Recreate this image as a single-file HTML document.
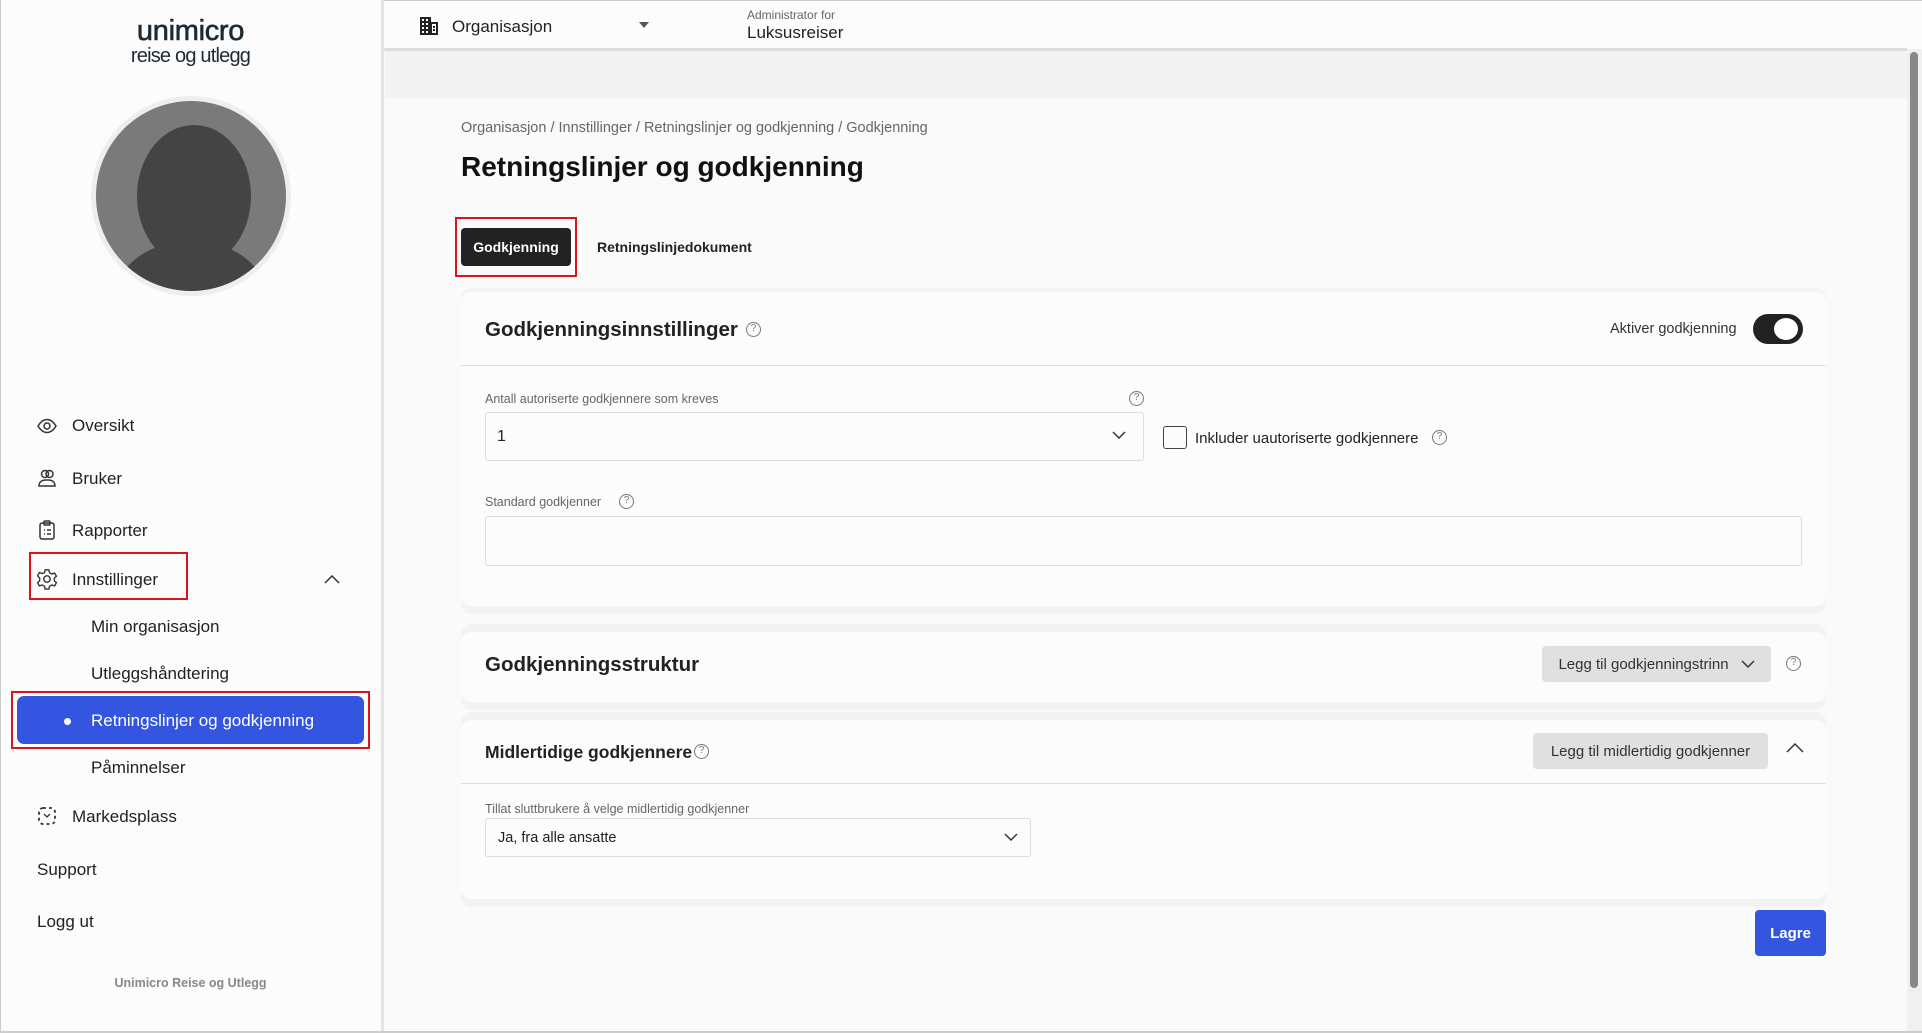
<!DOCTYPE html>
<html><head><meta charset="utf-8"><style>
*{box-sizing:border-box;margin:0;padding:0}
body{width:1922px;height:1033px;overflow:hidden;background:#fafafa;font-family:"Liberation Sans",Arial,sans-serif;color:#222;position:relative}
.a{position:absolute}
.side{left:0;top:0;width:384px;height:1033px;background:#fcfcfc;border-right:3px solid #e4e4e4;border-left:1px solid #ccc}
.nav{font-size:17px;color:#222;white-space:nowrap}
.ico{width:22px;height:22px}
.help{width:15px;height:15px;border:1.3px solid #777;border-radius:50%;font-size:10px;line-height:12px;text-align:center;color:#777}
.card{background:#f3f3f3;border-radius:10px;left:461px;width:1365px}
.inner{position:absolute;left:0;top:8px;right:0;background:#fcfcfc;border-radius:10px}
.btn{background:#e0e0e0;border-radius:4px;font-size:15px;color:#333;display:flex;align-items:center;justify-content:center}
.field{background:#fcfcfc;border:1px solid #ddd;border-radius:3px}
.lbl{font-size:12.5px;color:#666}
</style></head><body>
<div class="a" style="left:382px;top:0;width:1540px;height:49px;background:#fcfcfc;border-top:1px solid #ccc"></div>
<div class="a" style="left:382px;top:48px;width:1525px;height:3px;background:#ddd"></div>
<div class="a" style="left:385px;top:51px;width:1522px;height:47px;background:#f3f3f3"></div>
<div class="a" style="left:1907px;top:49px;width:15px;height:984px;background:#f0f0f0"></div>
<div class="a" style="left:1910px;top:52px;width:8px;height:936px;background:#888;border-radius:4px"></div>
<svg class="a" style="left:419px;top:16px" width="20" height="20" viewBox="0 0 20 20"><path d="M1 19V1h11v5h7v13z" fill="#222"/><g fill="#fff"><rect x="3" y="3" width="2" height="2"/><rect x="7" y="3" width="2" height="2"/><rect x="3" y="7" width="2" height="2"/><rect x="7" y="7" width="2" height="2"/><rect x="3" y="11" width="2" height="2"/><rect x="7" y="11" width="2" height="2"/><rect x="13" y="8" width="4" height="9"/><rect x="3" y="15" width="2" height="2"/><rect x="7" y="15" width="2" height="2"/></g><rect x="14" y="10" width="2" height="2" fill="#222"/><rect x="14" y="13" width="2" height="2" fill="#222"/></svg>
<div class="a" style="left:452px;top:17px;font-size:17px;color:#222">Organisasjon</div>
<div class="a" style="left:639px;top:22px;width:0;height:0;border-left:5px solid transparent;border-right:5px solid transparent;border-top:6px solid #555"></div>
<div class="a" style="left:747px;top:8px;font-size:12px;color:#666">Administrator for</div>
<div class="a" style="left:747px;top:23px;font-size:17px;color:#222">Luksusreiser</div>
<div class="a side"></div>
<div class="a" style="left:0;width:381px;top:15px;text-align:center;font-size:29px;color:#1c2b33;letter-spacing:-0.3px;-webkit-text-stroke:0.6px #1c2b33">unimicro</div>
<div class="a" style="left:0;width:381px;top:45px;text-align:center;font-size:20px;color:#1c2b33;letter-spacing:-0.8px">reise og utlegg</div>
<div class="a" style="left:91px;top:96px;width:200px;height:200px;border-radius:50%;background:#eee"></div>
<div class="a" style="left:96px;top:101px;width:190px;height:190px;border-radius:50%;background:#7a7a7a;overflow:hidden">
<div class="a" style="left:41px;top:24px;width:114px;height:142px;border-radius:50%;background:#444"></div>
<div class="a" style="left:20px;top:140px;width:150px;height:110px;border-radius:50%;background:#444"></div></div>
<svg class="a ico" style="left:36px;top:415px" viewBox="0 0 22 22" fill="none" stroke="#333" stroke-width="1.5"><path d="M2 11c3-5 6-6.5 9-6.5s6 1.5 9 6.5c-3 5-6 6.5-9 6.5S5 16 2 11z"/><circle cx="11" cy="11" r="3"/></svg>
<div class="a nav" style="left:72px;top:416px">Oversikt</div>
<svg class="a ico" style="left:36px;top:467px" viewBox="0 0 22 22" fill="none" stroke="#333" stroke-width="1.5"><circle cx="9" cy="7" r="3.5"/><circle cx="13.5" cy="7" r="3.5"/><path d="M3 19c0-4 3-6 7-6h2c4 0 7 2 7 6z"/></svg>
<div class="a nav" style="left:72px;top:469px">Bruker</div>
<svg class="a ico" style="left:36px;top:519px" viewBox="0 0 22 22" fill="none" stroke="#333" stroke-width="1.5"><rect x="4" y="4" width="14" height="16" rx="2"/><rect x="8" y="2" width="6" height="4" rx="1"/><path d="M8 11h1M11 11h4M8 15h1M11 15h4"/></svg>
<div class="a nav" style="left:72px;top:521px">Rapporter</div>
<svg class="a ico" style="left:36px;top:568px" viewBox="0 0 24 24" fill="none" stroke="#333" stroke-width="1.5"><path d="M10 2h4l.7 3 2.6 1.5 3-1 2 3.5-2.3 2v3l2.3 2-2 3.5-3-1-2.6 1.5-.7 3h-4l-.7-3-2.6-1.5-3 1-2-3.5 2.3-2v-3L1.7 8.5l2-3.5 3 1L9.3 5z"/><circle cx="12" cy="12" r="3.5"/></svg>
<div class="a nav" style="left:72px;top:570px">Innstillinger</div>
<div class="a" style="left:29px;top:552px;width:159px;height:48px;border:2px solid #d9141b"></div>
<svg class="a" style="left:324px;top:574px" width="16" height="10" viewBox="0 0 16 10" fill="none" stroke="#333" stroke-width="1.5"><path d="M1 9l7-7 7 7"/></svg>
<div class="a nav" style="left:91px;top:617px">Min organisasjon</div>
<div class="a nav" style="left:91px;top:664px">Utleggshåndtering</div>
<div class="a" style="left:17px;top:696px;width:347px;height:48px;background:#3355e0;border-radius:7px"></div>
<div class="a" style="left:11px;top:691px;width:359px;height:58px;border:2px solid #d9141b"></div>
<div class="a" style="left:64px;top:718px;width:7px;height:7px;border-radius:50%;background:#fff"></div>
<div class="a nav" style="left:91px;top:711px;color:#fff">Retningslinjer og godkjenning</div>
<div class="a nav" style="left:91px;top:758px">Påminnelser</div>
<svg class="a ico" style="left:36px;top:805px" viewBox="0 0 22 22" fill="none" stroke="#333" stroke-width="1.8" stroke-dasharray="3 3"><rect x="3" y="3" width="16" height="16" rx="4"/><path d="M8 9l3 3 3-3" stroke-dasharray="none" stroke-width="1.3"/></svg>
<div class="a nav" style="left:72px;top:807px">Markedsplass</div>
<div class="a nav" style="left:37px;top:860px">Support</div>
<div class="a nav" style="left:37px;top:912px">Logg ut</div>
<div class="a" style="left:0;width:381px;top:976px;text-align:center;font-size:12.5px;color:#888;font-weight:bold">Unimicro Reise og Utlegg</div>
<div class="a" style="left:461px;top:120px;font-size:14.5px;color:#666">Organisasjon / Innstillinger / Retningslinjer og godkjenning / Godkjenning</div>
<div class="a" style="left:461px;top:151px;font-size:28px;font-weight:bold;color:#111">Retningslinjer og godkjenning</div>
<div class="a" style="left:455px;top:217px;width:122px;height:60px;border:2px solid #d9141b"></div>
<div class="a" style="left:461px;top:228px;width:110px;height:38px;background:#222;border-radius:4px;color:#fff;font-size:14px;font-weight:bold;display:flex;align-items:center;justify-content:center">Godkjenning</div>
<div class="a" style="left:597px;top:239px;font-size:14px;font-weight:bold;color:#222">Retningslinjedokument</div>
<div class="a card" style="top:288px;height:326px"><div class="inner" style="top:4px;bottom:8px"></div></div>
<div class="a" style="left:485px;top:318px;font-size:20.5px;font-weight:bold;color:#222">Godkjenningsinnstillinger</div>
<div class="a help" style="left:746px;top:322px">?</div>
<div class="a" style="left:1610px;top:321px;font-size:14.5px;color:#333">Aktiver godkjenning</div>
<div class="a" style="left:1753px;top:314px;width:50px;height:30px;border-radius:15px;background:#222"></div>
<div class="a" style="left:1774px;top:318px;width:24px;height:22px;border-radius:50%;background:#fff"></div>
<div class="a" style="left:461px;top:365px;width:1365px;height:1px;background:#ddd"></div>
<div class="a lbl" style="left:485px;top:392px">Antall autoriserte godkjennere som kreves</div>
<div class="a help" style="left:1129px;top:391px">?</div>
<div class="a field" style="left:485px;top:412px;width:659px;height:49px"></div>
<div class="a" style="left:497px;top:428px;font-size:16px">1</div>
<svg class="a" style="left:1112px;top:431px" width="14" height="9" viewBox="0 0 14 9" fill="none" stroke="#333" stroke-width="1.5"><path d="M1 1l6 6 6-6"/></svg>
<div class="a" style="left:1163px;top:426px;width:24px;height:23px;border:1.5px solid #444;border-radius:3px"></div>
<div class="a" style="left:1195px;top:430px;font-size:15px;color:#222">Inkluder uautoriserte godkjennere</div>
<div class="a help" style="left:1432px;top:430px">?</div>
<div class="a lbl" style="left:485px;top:495px">Standard godkjenner</div>
<div class="a help" style="left:619px;top:494px">?</div>
<div class="a field" style="left:485px;top:516px;width:1317px;height:50px"></div>
<div class="a card" style="top:624px;height:86px"><div class="inner" style="bottom:8px"></div></div>
<div class="a" style="left:485px;top:653px;font-size:20.5px;font-weight:bold;color:#222">Godkjenningsstruktur</div>
<div class="a btn" style="left:1542px;top:646px;width:229px;height:36px">Legg til godkjenningstrinn <svg style="margin-left:12px" width="14" height="9" viewBox="0 0 14 9" fill="none" stroke="#333" stroke-width="1.5"><path d="M1 1l6 6 6-6"/></svg></div>
<div class="a help" style="left:1786px;top:656px">?</div>
<div class="a card" style="top:712px;height:195px"><div class="inner" style="bottom:8px"></div></div>
<div class="a" style="left:485px;top:742px;font-size:17.5px;font-weight:bold;color:#222">Midlertidige godkjennere</div>
<div class="a help" style="left:694px;top:744px">?</div>
<div class="a btn" style="left:1533px;top:733px;width:235px;height:36px">Legg til midlertidig godkjenner</div>
<svg class="a" style="left:1786px;top:742px" width="18" height="11" viewBox="0 0 18 11" fill="none" stroke="#333" stroke-width="1.5"><path d="M1 10l8-8 8 8"/></svg>
<div class="a" style="left:461px;top:783px;width:1365px;height:1px;background:#ddd"></div>
<div class="a lbl" style="left:485px;top:802px">Tillat sluttbrukere å velge midlertidig godkjenner</div>
<div class="a field" style="left:485px;top:818px;width:546px;height:39px"></div>
<div class="a" style="left:498px;top:830px;font-size:14.5px;color:#222">Ja, fra alle ansatte</div>
<svg class="a" style="left:1004px;top:833px" width="14" height="9" viewBox="0 0 14 9" fill="none" stroke="#333" stroke-width="1.5"><path d="M1 1l6 6 6-6"/></svg>
<div class="a" style="left:1755px;top:910px;width:71px;height:46px;background:#3355e0;border-radius:4px;color:#fff;font-size:15px;font-weight:bold;display:flex;align-items:center;justify-content:center">Lagre</div>
<div class="a" style="left:0;top:1031px;width:1922px;height:2px;background:#ccc"></div>
</body></html>
